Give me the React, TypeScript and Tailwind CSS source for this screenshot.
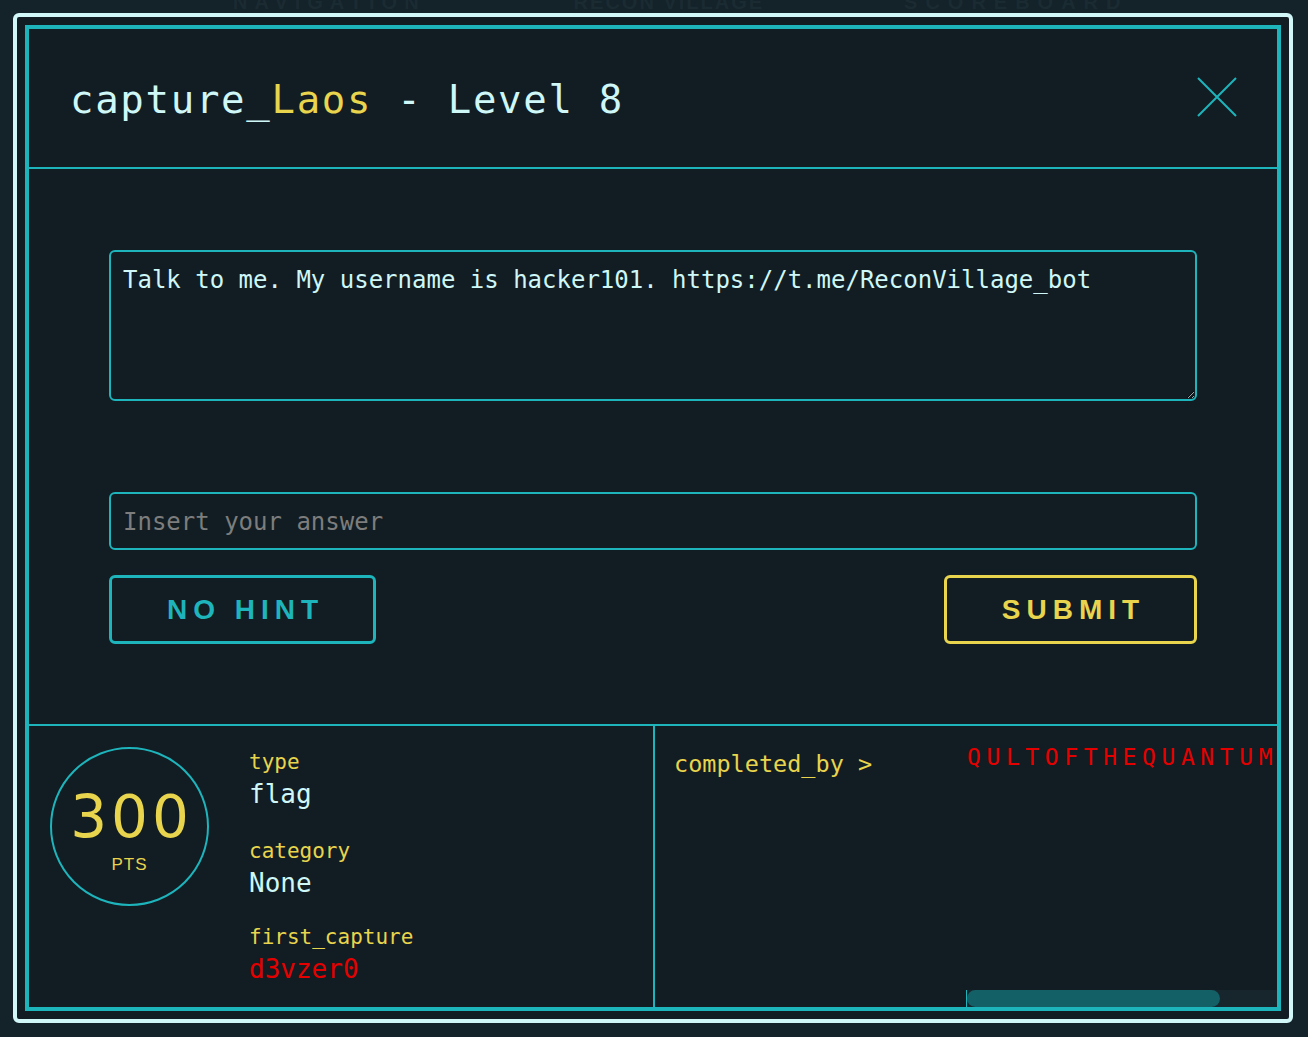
import React from "react";

const mono = { fontFamily: '"DejaVu Sans Mono", "Liberation Mono", monospace' };
const sans = { fontFamily: '"Liberation Sans", Arial, sans-serif' };
const dsans = { fontFamily: '"DejaVu Sans", "Liberation Sans", sans-serif' };

function CloseIcon() {
  return (
    <svg width="40" height="40" viewBox="0 0 40 40" className="mb-[6px] text-[#1eb4bc]">
      <path d="M1 1 L39 39 M39 1 L1 39" stroke="currentColor" strokeWidth="2" fill="none" />
    </svg>
  );
}

export default function App() {
  return (
    <div className="relative h-[1037px] w-[1308px] overflow-hidden bg-[#14222a] pb-[14px] pl-[13px] pr-[15px] pt-[13px]">
      {/* faint nav behind the modal */}
      <div
        className="absolute left-0 top-[-8px] flex w-full text-[20px] font-bold leading-[20px] text-[#1b2b32]"
        style={sans}
      >
        <span className="ml-[233px] tracking-[7px]">NAVIGATION</span>
        <span className="ml-[148px] tracking-[2px]">RECON VILLAGE</span>
        <span className="ml-[140px] tracking-[8px]">SCOREBOARD</span>
      </div>

      <div className="relative h-full rounded-[6px] border-4 border-[#d2f7f8] bg-[#121d23] p-[8px]">
        <div className="flex h-full flex-col border-4 border-[#1eb4bc]">
          {/* header */}
          <div className="flex h-[140px] shrink-0 items-center justify-between border-b-2 border-[#1eb4bc] pl-[41px] pr-[40px] pt-[4px]">
            <h1 className="text-[39px] tracking-[1.7px] text-[#cff7f7]" style={mono}>
              capture_<span className="text-[#e8d44d]">Laos</span> - Level 8
            </h1>
            <CloseIcon />
          </div>

          {/* body */}
          <div className="flex shrink-0 flex-col px-[80px] pb-[80px] pt-[81px]">
            <textarea
              readOnly
              defaultValue="Talk to me. My username is hacker101. https://t.me/ReconVillage_bot"
              className="h-[151px] w-full rounded-[6px] border-2 border-[#1eb4bc] bg-transparent px-[12px] pt-[13px] text-[24px] leading-[30px] text-[#cff7f7] outline-none"
              style={mono}
            />
            <input
              placeholder="Insert your answer"
              className="mt-[91px] h-[58px] w-full rounded-[6px] border-2 border-[#1eb4bc] bg-transparent px-[12px] pt-[2px] text-[24px] text-[#cff7f7] outline-none placeholder:text-[#7d7d7d]"
              style={mono}
            />
            <div className="mt-[25px] flex justify-between">
              <button
                className="flex h-[69px] w-[267px] items-center justify-center rounded-[6px] border-[3px] border-[#1eb4bc] pl-[6px] text-[28px] font-bold tracking-[6px] text-[#1eb4bc]"
                style={sans}
              >
                NO HINT
              </button>
              <button
                className="flex h-[69px] w-[253px] items-center justify-center rounded-[6px] border-[3px] border-[#e8d44d] pl-[6px] text-[28px] font-bold tracking-[6px] text-[#e8d44d]"
                style={sans}
              >
                SUBMIT
              </button>
            </div>
          </div>

          {/* footer */}
          <div className="flex min-h-0 flex-1 border-t-2 border-[#1eb4bc]">
            <div className="flex w-[626px] shrink-0 border-r-2 border-[#1eb4bc] pl-[21px] pt-[21px]">
              <div className="flex h-[159px] w-[159px] shrink-0 flex-col items-center justify-center rounded-full border-2 border-[#1eb4bc] text-[#e8d44d]">
                <span className="mt-[8px] pl-[4px] text-[58px] leading-[58px] tracking-[4px]" style={dsans}>
                  300
                </span>
                <span className="mt-[10px] text-[17px] leading-[17px] tracking-[1px]" style={sans}>
                  PTS
                </span>
              </div>
              <div className="ml-[40px] flex flex-col pt-[1px]" style={mono}>
                <span className="text-[21px] leading-[28px] text-[#e8d44d]">type</span>
                <span className="text-[26px] leading-[36px] text-[#cff7f7]">flag</span>
                <span className="mt-[25px] text-[21px] leading-[28px] text-[#e8d44d]">category</span>
                <span className="text-[26px] leading-[36px] text-[#cff7f7]">None</span>
                <span className="mt-[22px] text-[21px] leading-[28px] text-[#e8d44d]">first_capture</span>
                <span className="text-[26px] leading-[36px] text-[#e50000]">d3vzer0</span>
              </div>
            </div>

            <div className="flex min-w-0 flex-1">
              <div className="w-[311px] shrink-0 pl-[19px] pt-[22px]">
                <span className="text-[23.5px] leading-[32px] text-[#e8d44d]" style={mono}>
                  completed_by &gt;
                </span>
              </div>
              <div className="relative min-w-0 flex-1 overflow-hidden">
                <div
                  className="whitespace-nowrap pl-[1px] pt-[17px] text-[23px] leading-[28px] tracking-[5.6px] text-[#e50000]"
                  style={mono}
                >
                  QULTOFTHEQUANTUM
                </div>
                <div className="absolute bottom-0 left-0 flex h-[17px] w-full border-l border-[#1eb4bc] bg-[#17262d]">
                  <div className="h-full w-[253px] rounded-full bg-[#136066]" />
                </div>
              </div>
            </div>
          </div>
        </div>
      </div>
    </div>
  );
}
